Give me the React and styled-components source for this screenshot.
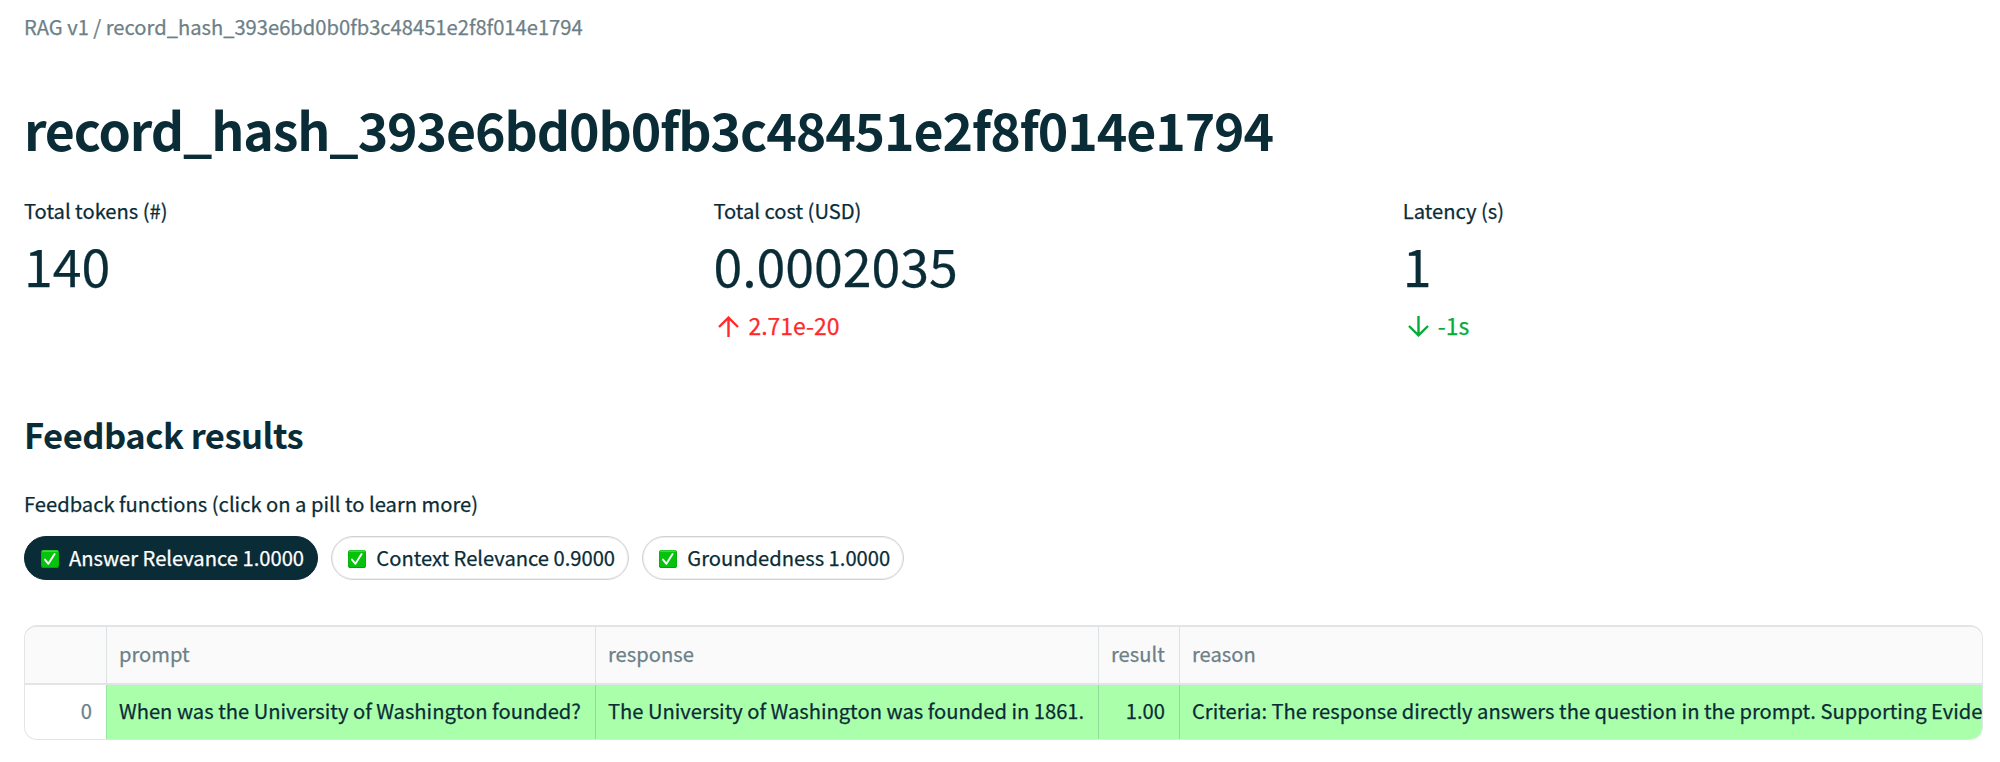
import React from "react";
import styled, { createGlobalStyle } from "styled-components";

const ink = "#0a2c37";
const muted = "#6c8087";
const line = "#e2e5e7";

const GlobalStyle = createGlobalStyle`
  *, *::before, *::after { box-sizing: border-box; }
  body {
    margin: 0;
    background: #fff;
    color: ${ink};
    font-family: "Noto Sans CJK SC", "Noto Sans", sans-serif;
    font-size: 20.16px;
    line-height: 32px;
    -webkit-text-stroke: 0.25px currentColor;
  }
`;

const Page = styled.main`
  display: flex;
  flex-direction: column;
  padding: 11px 17px 0 24px;
`;

const Breadcrumb = styled.nav`
  color: ${muted};
  white-space: nowrap;
`;

const Title = styled.h1`
  margin: 54px 0 0;
  font-size: 51.8px;
  font-weight: 700;
  line-height: 64px;
  letter-spacing: -1.1px;
  white-space: nowrap;
  -webkit-text-stroke: 0;
`;

const Metrics = styled.section`
  display: grid;
  grid-template-columns: 663.4px 663.4px 1fr;
  column-gap: 26px;
  margin-top: 34px;
`;

const Metric = styled.div`
  display: flex;
  flex-direction: column;
  height: 149px;
`;

const MetricLabel = styled.div`
  height: 32px;
`;

const MetricValue = styled.div`
  margin-top: 2px;
  font-size: 51.8px;
  line-height: 72px;
`;

const Delta = styled.div`
  display: flex;
  align-items: center;
  gap: 9px;
  margin-top: 6px;
  padding-left: 5px;
  font-size: 23px;
  line-height: 36px;
  color: ${(p) => (p.$down ? "#09ab3b" : "#ff2b2b")};
`;

const ArrowSvg = styled.svg`
  display: block;
  width: 21px;
  height: 21px;
  margin-top: 2px;
  transform: ${(p) => (p.$down ? "rotate(180deg)" : "none")};
`;

const SectionTitle = styled.h2`
  margin: 66px 0 0;
  font-size: 34.6px;
  font-weight: 700;
  line-height: 48px;
  letter-spacing: -0.5px;
  -webkit-text-stroke: 0;
`;

const FieldLabel = styled.div`
  margin-top: 30px;
`;

const Pills = styled.div`
  display: flex;
  gap: 13px;
  margin-top: 16px;
`;

const Pill = styled.button`
  display: flex;
  align-items: center;
  gap: 10px;
  height: 44px;
  padding: 0 13.3px 0 16px;
  border: 1px solid ${(p) => (p.$active ? ink : "#cfd2d4")};
  border-radius: 22px;
  box-shadow: inset 0 0 0 1px ${(p) => (p.$active ? ink : "#eceeef")};
  background: ${(p) => (p.$active ? ink : "#fff")};
  color: ${(p) => (p.$active ? "#fff" : ink)};
  font: inherit;
  white-space: nowrap;
`;

const CheckSvg = styled.svg`
  display: block;
  width: 18px;
  height: 18px;
  margin-top: 2px;
`;

const Table = styled.div`
  display: grid;
  grid-template-columns: 82px 489px 503px 81px 1fr;
  grid-template-rows: 58px 54px;
  margin-top: 45px;
  border: 1px solid ${line};
  border-top-width: 2px;
  border-radius: 13px;
  overflow: hidden;
`;

const Cell = styled.div`
  display: flex;
  align-items: center;
  justify-content: ${(p) => (p.$right ? "flex-end" : "flex-start")};
  min-width: 0;
  padding: 0 ${(p) => (p.$right ? 14 : 0)}px 2px ${(p) => (p.$right ? 0 : 12)}px;
  border-right: ${(p) => (p.$last ? 0 : 1)}px solid #dce1e3;
  white-space: nowrap;
  overflow: hidden;
`;

const HeadCell = styled(Cell)`
  background: #fafafa;
  border-bottom: 2px solid ${line};
  color: ${muted};
`;

const IndexCell = styled(Cell)`
  border-right-color: #98e5a0;
  color: ${muted};
  padding-bottom: 3px;
`;

const DataCell = styled(Cell)`
  background: #aaffaa;
  border-right-color: #90dc98;
  padding-bottom: 3px;
`;

function Arrow({ down }) {
  return (
    <ArrowSvg viewBox="0 0 21 21" fill="none" stroke="currentColor" strokeWidth="2.4" $down={down}>
      <path d="M10.5 21V1.8M1 11l9.5-9.4L20 11" />
    </ArrowSvg>
  );
}

function Check() {
  return (
    <CheckSvg viewBox="0 0 18 18">
      <rect width="18" height="18" rx="2.6" fill="#0a9f10" />
      <rect x="0.4" y="0.2" width="17.2" height="16.8" rx="2.4" fill="#05c20b" />
      <path d="M1.6 1.1h14.8" stroke="#55dc55" strokeWidth="1.3" strokeLinecap="round" />
      <path d="M4 9.6l3.4 4.2L13.6 4" fill="none" stroke="#fff" strokeWidth="1.9" strokeLinecap="round" strokeLinejoin="round" />
    </CheckSvg>
  );
}

const metrics = [
  { label: "Total tokens (#)", value: "140" },
  { label: "Total cost (USD)", value: "0.0002035", delta: "2.71e-20" },
  { label: "Latency (s)", value: "1", delta: "-1s", down: true },
];

const feedbacks = ["Answer Relevance 1.0000", "Context Relevance 0.9000", "Groundedness 1.0000"];

export default function App() {
  return (
    <>
      <GlobalStyle />
      <Page>
        <Breadcrumb>RAG v1 / record_hash_393e6bd0b0fb3c48451e2f8f014e1794</Breadcrumb>
        <Title>record_hash_393e6bd0b0fb3c48451e2f8f014e1794</Title>
        <Metrics>
          {metrics.map((m) => (
            <Metric key={m.label}>
              <MetricLabel>{m.label}</MetricLabel>
              <MetricValue>{m.value}</MetricValue>
              {m.delta && (
                <Delta $down={m.down}>
                  <Arrow down={m.down} />
                  <span>{m.delta}</span>
                </Delta>
              )}
            </Metric>
          ))}
        </Metrics>
        <SectionTitle>Feedback results</SectionTitle>
        <FieldLabel>Feedback functions (click on a pill to learn more)</FieldLabel>
        <Pills>
          {feedbacks.map((f, i) => (
            <Pill key={f} $active={i === 0}>
              <Check />
              <span>{f}</span>
            </Pill>
          ))}
        </Pills>
        <Table>
          <HeadCell />
          <HeadCell>prompt</HeadCell>
          <HeadCell>response</HeadCell>
          <HeadCell>result</HeadCell>
          <HeadCell $last>reason</HeadCell>
          <IndexCell $right>0</IndexCell>
          <DataCell>When was the University of Washington founded?</DataCell>
          <DataCell>The University of Washington was founded in 1861.</DataCell>
          <DataCell $right>1.00</DataCell>
          <DataCell $last>Criteria: The response directly answers the question in the prompt. Supporting Evide</DataCell>
        </Table>
      </Page>
    </>
  );
}
